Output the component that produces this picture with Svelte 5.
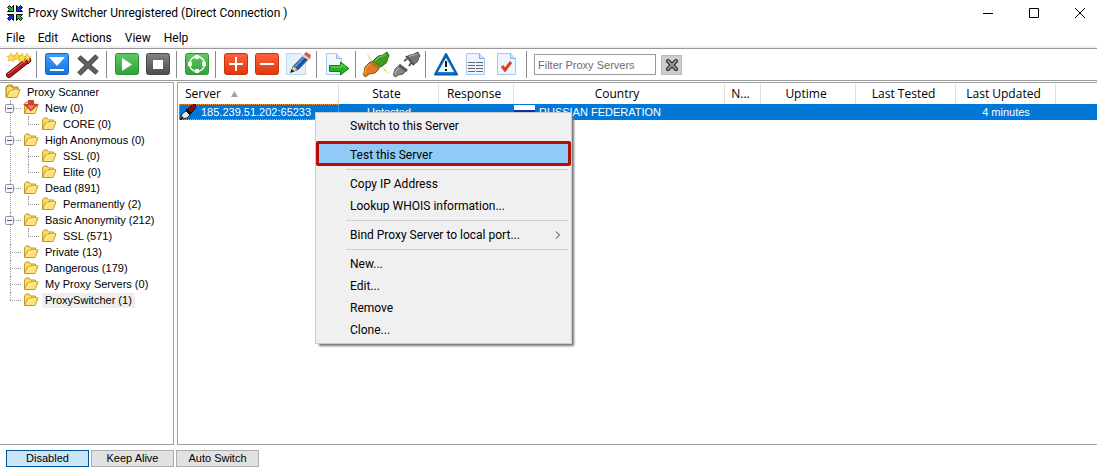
<script>
  let filter = $state('')
  let mode = $state('Disabled')
  let selected = $state('ProxySwitcher (1)')

  const menus = ['File', 'Edit', 'Actions', 'View', 'Help']
  const modes = ['Disabled', 'Keep Alive', 'Auto Switch']

  const toolbar = [
    [['wand', 'Wizard']],
    [['download', 'Download proxy list'], ['cross', 'Stop download']],
    [['play', 'Start test'], ['stop', 'Stop test']],
    [['cycle', 'Scan']],
    [['plus', 'Add'], ['minus', 'Remove'], ['edit', 'Edit']],
    [['export', 'Export']],
    [['plug', 'Connect'], ['unplug', 'Disconnect']],
    [['warning', 'Warnings'], ['report', 'Report'], ['verified', 'Verified']],
  ]

  const tree = [
    { label: 'New (0)', icon: 'new', children: ['CORE (0)'] },
    { label: 'High Anonymous (0)', children: ['SSL (0)', 'Elite (0)'] },
    { label: 'Dead (891)', children: ['Permanently (2)'] },
    { label: 'Basic Anonymity (212)', children: ['SSL (571)'] },
    { label: 'Private (13)' },
    { label: 'Dangerous (179)' },
    { label: 'My Proxy Servers (0)' },
    { label: 'ProxySwitcher (1)' },
  ]

  const columns = ['State', 'Response', 'Country', 'N...', 'Uptime', 'Last Tested', 'Last Updated']

  const contextMenu = [
    ['Switch to this Server'],
    ['Test this Server'],
    ['Copy IP Address', 'Lookup WHOIS information...'],
    ['Bind Proxy Server to local port...'],
    ['New...', 'Edit...', 'Remove', 'Clone...'],
  ]
</script>

{#snippet folder(kind)}
  <svg width="16" height="16" viewBox="0 0 16 16" aria-hidden="true">
    {#if kind === 'root'}
      <path d="M1 13V3l2-2h4l1 2h5v3" fill="#f3cf4e" stroke="#b88912" />
    {/if}
    <path d="M1.500 13.500v-10l1.500-1.500h3l1.500 2h5v2.500" fill="#f8dc6a" stroke="#c79a1c" />
    <path d="M1.500 13.500l3-6.500h2l1.500-1.200h7l-3 7.700z" fill="#ffe37a" stroke="#c79a1c" />
    <path d="M4 12l2-4.500h2.500l1-.8H13" fill="none" stroke="#fff3b4" />
    {#if kind === 'new'}
      <path d="M5 0h6v4h5L8 11.500 0 4h5z" fill="#d2432f" />
      <path d="M4.500 5.500h7L8 9.500z" fill="#e58a80" />
    {/if}
  </svg>
{/snippet}

{#snippet icon(name)}
  <svg width="28" height="28" viewBox="0 0 28 28" aria-hidden="true">
    {#if name === 'wand'}
      <path d="M5 24L24 9" stroke="#6f0c0c" stroke-width="6" stroke-linecap="round" />
      <path d="M5 24L24 9" stroke="#b51c1c" stroke-width="4" stroke-linecap="round" />
      <path d="M4 23L22 9" stroke="#ee6a5c" stroke-width="1" />
      <path d="M22 8l4-1 1 3-3 3z" fill="#d9474a" stroke="#6f0c0c" />
      <g fill="#ffe23c" stroke="#e9a11d" stroke-width=".6">
        <path d="M7 2l1 3 3 .500-2 2 .500 3-2.500-1.500L4 10l1-3-2-2 3 0z" />
        <path d="M13 1l1 3 3 .500-2 2 .500 3-2.500-1.500L10 9l1-3-2-2 3 0z" />
        <path d="M18 2l1.500 3 3 .500-2.500 2 .500 4-2.500-2-3 1.500 1-3-2-2.500 3-.500z" />
        <path d="M23 2l1 3 3 .500-2 2 .500 2-2.500-1-2 1 1-3-2-1 2-.5z" />
      </g>
    {:else if name === 'download'}
      <rect x="2.500" y="2.500" width="23" height="21" rx="2" fill="url(#blue)" stroke="#1264c4" />
      <path d="M6 6h16l-8 9z" fill="#fff" />
      <path d="M7 19h14" stroke="#fff" stroke-width="2" />
    {:else if name === 'cross'}
      <path d="M5 6l18 16M23 5L5 23" stroke="#484848" stroke-width="5" />
      <path d="M5 6l18 16M23 5L5 23" stroke="#626262" stroke-width="3" />
    {:else if name === 'play'}
      <rect x="2.500" y="2.500" width="23" height="21" rx="2" fill="url(#green)" stroke="#2b9431" />
      <path d="M9 7v13l10-6.500z" fill="#fff" />
    {:else if name === 'stop'}
      <rect x="2.500" y="2.500" width="23" height="21" rx="2" fill="url(#gray)" stroke="#484848" />
      <rect x="9" y="9" width="10" height="9" fill="#fff" />
    {:else if name === 'cycle'}
      <rect x="2.500" y="2.500" width="23" height="21" rx="2" fill="url(#green)" stroke="#37963a" />
      <circle cx="14" cy="13" r="7.500" fill="none" stroke="#fff" stroke-width="1.500" />
      <path d="M12 4h4v4h-4zM12 18h4v4h-4zM5 11h4v4H5zM19 11h4v4h-4z" fill="#fff" />
    {:else if name === 'plus' || name === 'minus'}
      <rect x="2.500" y="2.500" width="23" height="21" rx="2" fill="url(#red)" stroke="#c93410" />
      <path d="M7 13h14" stroke="#fff" stroke-width="2" />
      {#if name === 'plus'}
        <path d="M14 6v14" stroke="#fff" stroke-width="2" />
      {/if}
    {:else if name === 'edit'}
      <path d="M2.500 2.500h14l5 5v16h-19z" fill="#e4f0fb" stroke="#bdd6ee" />
      <path d="M7 21l2-6L21 3l5 3-12 13z" fill="#263a4e" />
      <path d="M9 16L20 5l2 1-11 12z" fill="#4390dc" />
      <path d="M12 18L23 7l2 1-11 11z" fill="#1b5da4" />
      <path d="M18 5l2-2 6 4-2 2z" fill="#d7d7d7" />
      <path d="M20 3l2-2 5 3-1 4z" fill="#e0563c" />
      <path d="M7 21l2-6 5 4z" fill="#efd4a0" stroke="#555" stroke-width=".5" />
      <path d="M6 22l1.500-4 3 2.500z" fill="#222" />
    {:else if name === 'export'}
      <path d="M3.500 2.500h10l5 5v16h-15z" fill="#f2f8fe" stroke="#a9caea" />
      <path d="M13.500 2.500v5h5" fill="#d5e8f9" stroke="#8bb9e6" />
      <path d="M6.500 14.500h11v-3.500L26 17.500 17.500 24v-3.500h-11z" fill="#25b325" stroke="#11811a" />
      <path d="M8 16h10.500v-2.500l4 3.500" fill="none" stroke="#6fdd62" />
    {:else if name === 'plug'}
      <path d="M11 10l4-4c2-2 4-1 6-2l4-3 2 4c-2 2-1 5-3 7l-5 4z" fill="#3f9d1d" stroke="#2a6516" />
      <path d="M13 10l4-4c2-1 4 0 7-3" fill="none" stroke="#8ed858" />
      <path d="M8 11l9 7-4 4c-2 1-5 0-7 2l-3 2-2-3c2-2 1-4 2-7z" fill="#dd7a22" stroke="#93500f" />
      <path d="M8 13l-4 4c-1 2 0 4-2 6" fill="none" stroke="#f8b764" />
      <path d="M9 10l9 7" stroke="#a8681c" stroke-width="2" />
      <path d="M5 3l3 3H6l3 3M21 17l3 2h-2l4 3" fill="none" stroke="#f0e04a" />
    {:else if name === 'unplug'}
      <path d="M14 6c3-3 5-2 7-3l4-2 2 4c-2 2-1 4-3 6l-4 3z" fill="#777" stroke="#565656" />
      <path d="M16 6c3-3 5-1 8-3" fill="none" stroke="#b5b5b5" />
      <path d="M14 8l-3 2M18 12l-2 3M13 5l8 9" stroke="#555" stroke-width="2" />
      <path d="M6 15l7 5-3 3c-2 1-4 0-6 2l-2 1-2-3c2-2 1-4 3-6z" fill="#858585" stroke="#5b5b5b" />
      <path d="M6 17l-2 2c-2 1-1 3-2 5" fill="none" stroke="#c0c0c0" />
      <path d="M6 14l8 6" stroke="#5b5b5b" stroke-width="3" />
    {:else if name === 'warning'}
      <path d="M14 3L25 23.500H3z" fill="#1682dc" stroke="#0b5ca9" stroke-width="2" stroke-linejoin="round" />
      <path d="M14 7l8 14H6z" fill="#f3f9fd" />
      <path d="M14 10v6M14 18v2" stroke="#111" stroke-width="2" />
    {:else if name === 'report' || name === 'verified'}
      <path d="M3.500 2.500h13l5 5v16h-18z" fill="#edf6fe" stroke="#a4c9ed" />
      <path d="M16.500 2.500v5h5" fill="#c9e3fa" stroke="#75b3e9" />
      {#if name === 'report'}
        <path d="M5 11.500h7M13 11.500h7M5 14.500h7M13 14.500h7M5 17.500h7M13 17.500h7M5 20.500h7M13 20.500h7" stroke="#666" />
      {:else}
        <path d="M8 15l3 4 6-8" fill="none" stroke="#df3d20" stroke-width="3" />
      {/if}
    {/if}
  </svg>
{/snippet}

<svg class="defs" width="0" height="0" aria-hidden="true">
  <defs>
    <linearGradient id="blue" x2="0" y2="1"><stop stop-color="#3fa0ff" /><stop offset="1" stop-color="#1573dc" /></linearGradient>
    <linearGradient id="green" x2="0" y2="1"><stop stop-color="#62c964" /><stop offset="1" stop-color="#2da335" /></linearGradient>
    <linearGradient id="gray" x2="0" y2="1"><stop stop-color="#838383" /><stop offset="1" stop-color="#4b4b4b" /></linearGradient>
    <linearGradient id="red" x2="0" y2="1"><stop stop-color="#ff633a" /><stop offset="1" stop-color="#df3510" /></linearGradient>
  </defs>
</svg>

<div class="window">
  <header class="titlebar">
    <svg width="16" height="16" viewBox="0 0 16 16" aria-hidden="true">
      <g stroke="#000" stroke-width="1">
        <path d="M.500 2.500l2-2 2 2 2-2v6h-6l2-2z" fill="#17bd29" />
        <path d="M9.500.500l2 2 2-2 2 2-2 2 2 2h-6z" fill="#1534dc" />
        <path d="M.500 9.500h6v6l-2-2-2 2-2-2 2-2z" fill="#1534dc" />
        <path d="M9.500 9.500h6l-2 2 2 2-2 2-2-2-2 2z" fill="#17bd29" />
      </g>
    </svg>
    <span>Proxy Switcher Unregistered (Direct Connection )</span>
    <div class="caption">
      <button aria-label="Minimize"><svg width="12" height="12"><path d="M1 6.500h10" stroke="#000" /></svg></button>
      <button aria-label="Maximize"><svg width="12" height="12"><path d="M1.500 1.500h9v9h-9z" fill="none" stroke="#000" /></svg></button>
      <button aria-label="Close"><svg width="12" height="12"><path d="M1 1l10 10M11 1L1 11" stroke="#000" /></svg></button>
    </div>
  </header>

  <nav class="menubar">
    {#each menus as item}
      <button>{item}</button>
    {/each}
  </nav>

  <div class="toolbar">
    {#each toolbar as group}
      <div class="group">
        {#each group as [name, label]}
          <button class="tool" aria-label={label}>{@render icon(name)}</button>
        {/each}
      </div>
    {/each}
    <input class="filter" type="text" aria-label="Filter Proxy Servers" placeholder="Filter Proxy Servers" bind:value={filter} />
    <button class="clear" aria-label="Clear filter" onclick={() => (filter = '')}>
      <svg width="14" height="14" viewBox="0 0 14 14">
        <path d="M3 3l8 8M11 3l-8 8" stroke="#222" stroke-width="4" stroke-linecap="round" />
        <path d="M3 3l8 8M11 3l-8 8" stroke="#999" stroke-width="2" stroke-linecap="round" />
      </svg>
    </button>
  </div>

  <main class="panels">
    <aside class="tree">
      <button class="node">{@render folder('root')}<span class="node-label">Proxy Scanner</span></button>
      <ul class="branch">
        {#each tree as item}
          <li>
            <button class="node" onclick={() => (selected = item.label)}>
              {#if item.children}
                <svg class="expander" width="9" height="9"><rect x=".5" y=".5" width="8" height="8" rx="1" fill="#f4f4f4" stroke="#919191" /><path d="M2 4.500h5" stroke="#3c57a8" /></svg>
              {/if}
              {@render folder(item.icon)}
              <span class="node-label" class:node-label--selected={selected === item.label}>{item.label}</span>
            </button>
            {#if item.children}
              <ul class="branch">
                {#each item.children as child}
                  <li>
                    <button class="node">{@render folder()}<span class="node-label">{child}</span></button>
                  </li>
                {/each}
              </ul>
            {/if}
          </li>
        {/each}
      </ul>
    </aside>

    <section class="list">
      <table>
        <colgroup>
          <col class="w-server" /><col class="w-100" /><col class="w-response" /><col class="w-country" />
          <col class="w-n" /><col class="w-uptime" /><col class="w-100" /><col class="w-100" /><col />
        </colgroup>
        <thead>
          <tr>
            <th class="server">
              <span>Server <svg width="7" height="6"><path d="M3.500 0L7 6H0z" fill="#a3a3a3" /></svg></span>
            </th>
            {#each columns as column}
              <th>{column}</th>
            {/each}
            <th class="rest"></th>
          </tr>
        </thead>
        <tbody>
          <tr>
            <td class="focused">
              <span class="cell">
                <svg width="16" height="16" viewBox="0 0 16 16" aria-hidden="true">
                  <path d="M7 6l4-4 4-2 1 2-2 4-4 4z" fill="#8d0d12" stroke="#250000" />
                  <path d="M6 5l5 5" stroke="#111" stroke-width="2" />
                  <path d="M6 7l4 4-3 3-4 1-2-2 1-3z" fill="#e9e9e9" stroke="#222" />
                  <path d="M3 13l-3 3" stroke="#222" stroke-width="2" />
                </svg>
                185.239.51.202:65233
              </span>
            </td>
            <td>Untested</td>
            <td></td>
            <td>
              <span class="cell cell--country">
                <svg width="21" height="14" aria-hidden="true"><path d="M0 0h21v5H0z" fill="#fff" /><path d="M0 5h21v5H0z" fill="#0b32a6" /><path d="M0 10h21v4H0z" fill="#d32020" /></svg>
                RUSSIAN FEDERATION
              </span>
            </td>
            <td></td>
            <td></td>
            <td></td>
            <td>4 minutes</td>
            <td></td>
          </tr>
        </tbody>
      </table>
    </section>
  </main>

  <footer class="statusbar">
    {#each modes as item}
      <button class="mode" class:mode--active={mode === item} aria-pressed={mode === item} onclick={() => (mode = item)}>{item}</button>
    {/each}
  </footer>

  <div class="context" role="menu">
    {#each contextMenu as section}
      <div class="context-section">
        {#each section as item}
          <button class="context-item" class:context-item--marked={item === 'Test this Server'} role="menuitem">
            {item}
            {#if item.startsWith('Bind')}
              <svg width="6" height="8"><path d="M1 .500L4.500 4 1 7.500" fill="none" stroke="#333" /></svg>
            {/if}
          </button>
        {/each}
      </div>
    {/each}
  </div>
</div>

<style>
  :global(body) {
    background: #fff;
  }

  .window {
    --ui: Roboto, 'Open Sans', sans-serif;
    --header: 'Open Sans', 'Noto Sans', sans-serif;
    --classic: 'Liberation Sans', Arial, sans-serif;
    position: relative;
    display: flex;
    flex-direction: column;
    min-height: 100vh;
    overflow: hidden;
    font: 12px/16px var(--ui);
    color: #000;
  }

  .defs {
    position: absolute;
  }

  svg {
    display: block;
    flex: none;
  }

  button {
    margin: 0;
    padding: 0;
    border: 0;
    background: none;
    font: inherit;
    color: inherit;
    white-space: nowrap;
  }

  .titlebar {
    display: flex;
    align-items: center;
    gap: 5px;
    height: 26px;
    padding-left: 7px;
  }

  .caption {
    display: flex;
    margin: 0 -6px 0 auto;
  }

  .caption button {
    display: grid;
    place-items: center;
    width: 46px;
    height: 24px;
  }

  .menubar {
    display: flex;
    gap: 13px;
    height: 20px;
    padding: 0 6px;
    border-bottom: 2px solid #f0f0f0;
  }

  .menubar button {
    padding-top: 4px;
  }

  .toolbar {
    display: flex;
    align-items: center;
    height: 31px;
    padding-left: 2px;
    border-top: 1px solid #999;
    border-bottom: 1px solid #999;
  }

  .group {
    display: flex;
    margin-right: 4px;
    padding-right: 3px;
    border-right: 1px solid #8c8c8c;
  }

  .tool {
    display: grid;
    place-items: center;
    width: 31px;
    height: 27px;
  }

  .filter {
    box-sizing: border-box;
    width: 122px;
    height: 21px;
    margin-left: 3px;
    padding: 0 3px;
    border: 1px solid #999;
    font: 11px/16px var(--classic);
  }

  .filter::placeholder {
    color: #6d6d6d;
    opacity: 1;
  }

  .clear {
    display: grid;
    place-items: center;
    width: 21px;
    height: 20px;
    margin-left: 5px;
    border: 1px solid #bbb;
    background: #ccc;
  }

  .panels {
    display: flex;
    flex: 1;
    gap: 3px;
    padding-top: 1px;
    font-family: var(--classic);
  }

  .tree {
    box-sizing: border-box;
    width: 174px;
    padding: 1px 0 0 5px;
    border: 1px solid #a0a0a5;
    border-left: 0;
    font-size: 11px;
  }

  .branch {
    margin: 0;
    padding: 0;
    list-style: none;
  }

  .branch li {
    position: relative;
    padding-left: 18px;
  }

  /* dotted guides between siblings */
  .branch li::before {
    content: '';
    position: absolute;
    top: 0;
    bottom: 0;
    left: 5px;
    border-left: 1px dotted #999;
  }

  .branch li:last-child::before {
    bottom: auto;
    height: 8px;
  }

  .branch li::after {
    content: '';
    position: absolute;
    top: 8px;
    left: 5px;
    width: 11px;
    border-top: 1px dotted #999;
  }

  .node {
    display: flex;
    align-items: center;
    gap: 3px;
    height: 16px;
  }

  .expander {
    position: absolute;
    z-index: 1;
    top: 4px;
    left: 0;
  }

  .node-label {
    padding: 0 3px;
    line-height: 15px;
  }

  .node-label--selected {
    background: #eee;
  }

  .list {
    flex: 1;
    min-width: 0;
    padding: 1px 0 0 1px;
    border: 1px solid #a0a0a5;
    border-right: 0;
    overflow: hidden;
  }

  table {
    width: 100%;
    border-collapse: separate;
    border-spacing: 0;
    table-layout: fixed;
  }

  .w-server {
    width: 160px;
  }

  .w-100 {
    width: 100px;
  }

  .w-response {
    width: 75px;
  }

  .w-country {
    width: 211px;
  }

  .w-n {
    width: 36px;
  }

  .w-uptime {
    width: 95px;
  }

  th {
    box-sizing: border-box;
    height: 20px;
    padding: 0 4px 0 0;
    border-right: 1px solid #e0e0e0;
    font: 12px/16px var(--header);
    white-space: nowrap;
  }

  .server {
    padding-left: 6px;
  }

  .server span {
    display: flex;
    align-items: center;
    gap: 10px;
  }

  .rest {
    border: 0;
  }

  td {
    box-sizing: border-box;
    height: 16px;
    padding: 0;
    background: #0078d7;
    color: #fff;
    font-size: 11px;
    line-height: 14px;
    text-align: center;
    white-space: nowrap;
  }

  .focused {
    border: 1px dotted #f0953a;
  }

  .cell {
    display: flex;
    align-items: center;
    gap: 5px;
    height: 14px;
  }

  .cell--country {
    gap: 4px;
  }

  .statusbar {
    display: flex;
    gap: 2px;
    padding: 5px 6px 3px;
    font-family: var(--classic);
  }

  .mode {
    width: 83px;
    height: 17px;
    border: 1px solid #adadad;
    background: #e1e1e1;
    font-size: 11px;
    line-height: 15px;
  }

  .mode--active {
    border-color: #005499;
    background: #cce4f7;
  }

  .context {
    position: absolute;
    top: 112px;
    left: 315px;
    box-sizing: border-box;
    width: 257px;
    padding: 2px 0;
    border: 1px solid #ccc;
    background: #f0f0f0;
    box-shadow: 3px 3px 2px -1px #777;
  }

  .context-section:nth-child(n + 3)::before {
    content: '';
    display: block;
    margin: 3px 3px 3px 30px;
    border-top: 1px solid #d0d0d0;
  }

  .context-item {
    display: flex;
    align-items: center;
    justify-content: space-between;
    width: 100%;
    height: 22px;
    padding: 0 10px 0 34px;
  }

  .context-item--marked {
    height: 25px;
    margin-top: 4px;
    padding: 2px 7px 0 31px;
    border: 3px solid #b90c04;
    border-radius: 2px;
    background: #91c9f7;
  }
</style>
